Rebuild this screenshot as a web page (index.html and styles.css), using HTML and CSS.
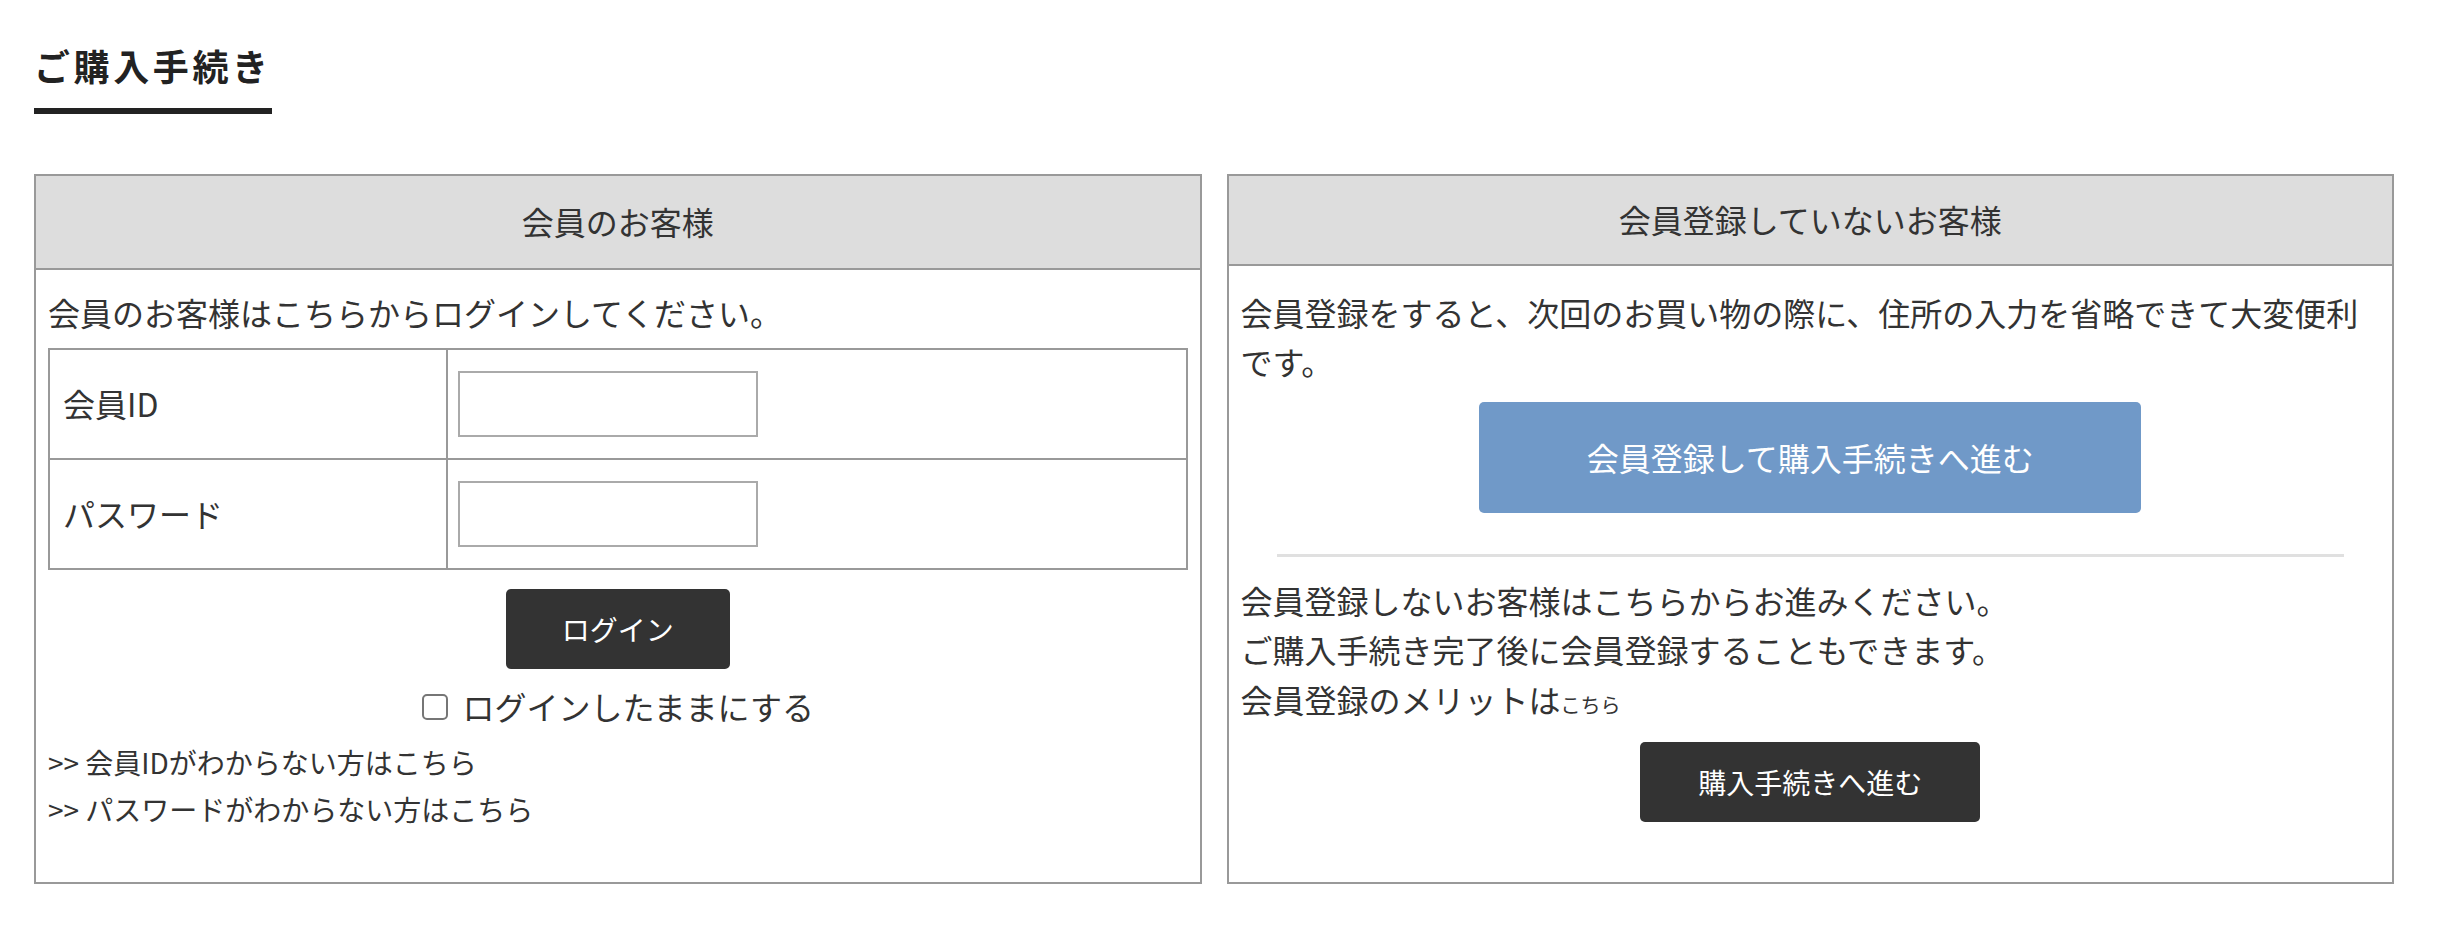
FILE: index.html
```html
<!DOCTYPE html>
<html lang="ja">
<head>
<meta charset="utf-8">
<title>ご購入手続き</title>
<link rel="stylesheet" href="styles.css">
</head>
<body>
<div class="page">
  <h1 class="page-title">ご購入手続き</h1>
  <div class="panels">
    <section class="panel">
      <h2 class="panel-head">会員のお客様</h2>
      <div class="panel-body panel-body--login">
        <p class="text">会員のお客様はこちらからログインしてください。</p>
        <table class="login-table">
          <tr>
            <th>会員ID</th>
            <td><input type="text" class="field"></td>
          </tr>
          <tr>
            <th>パスワード</th>
            <td><input type="password" class="field"></td>
          </tr>
        </table>
        <div class="actions actions--login">
          <button type="button" class="btn btn-dark">ログイン</button>
        </div>
        <label class="keep">
          <input type="checkbox" class="check">
          <span>ログインしたままにする</span>
        </label>
        <ul class="help-links">
          <li><a class="help-link">&gt;&gt; 会員IDがわからない方はこちら</a></li>
          <li><a class="help-link">&gt;&gt; パスワードがわからない方はこちら</a></li>
        </ul>
      </div>
    </section>
    <section class="panel">
      <h2 class="panel-head panel-head--short">会員登録していないお客様</h2>
      <div class="panel-body panel-body--guest">
        <p class="text">会員登録をすると、次回のお買い物の際に、住所の入力を省略できて大変便利です。</p>
        <div class="actions actions--register">
          <button type="button" class="btn btn-blue">会員登録して購入手続きへ進む</button>
        </div>
        <hr class="divider">
        <p class="text">会員登録しないお客様はこちらからお進みください。</p>
        <p class="text">ご購入手続き完了後に会員登録することもできます。</p>
        <p class="text">会員登録のメリットは<a class="small-link">こちら</a></p>
        <div class="actions actions--guest">
          <button type="button" class="btn btn-dark btn-wide">購入手続きへ進む</button>
        </div>
      </div>
    </section>
  </div>
</div>
</body>
</html>
```
FILE: styles.css
```css
* {
  box-sizing: border-box;
}

html,
body {
  margin: 0;
  background: #fff;
}

body {
  font-family: "Noto Sans CJK JP", "Noto Sans", sans-serif;
  color: #333;
}

.page {
  padding: 38px 44px 0 34px;
}

.page-title {
  width: fit-content;
  margin: 0 0 60px;
  padding-bottom: 16px;
  border-bottom: 6px solid #222;
  font-size: 36px;
  font-weight: 700;
  line-height: 54px;
  letter-spacing: 3.6px;
  color: #222;
}

.panels {
  display: flex;
  gap: 25px;
  align-items: stretch;
}

.panel {
  flex: 1 1 0;
  border: 2px solid #999;
}

.panel-head {
  margin: 0;
  padding: 21px 0;
  background: #ddd;
  border-bottom: 2px solid #999;
  text-align: center;
  font-size: 32px;
  font-weight: 400;
  line-height: 49.6px;
  color: #333;
}

.panel-head--short {
  padding: 19px 0;
}

.panel-body {
  padding: 18px 12px 49px;
  font-size: 32px;
  line-height: 49.6px;
}

.panel-body--guest {
  padding-top: 22px;
}

.text {
  margin: 0;
}

.login-table {
  width: 100%;
  margin-top: 11px;
  border-collapse: collapse;
}

.login-table th,
.login-table td {
  border: 2px solid #999;
  padding: 21px 10px;
  vertical-align: middle;
}

.login-table th {
  width: 35%;
  padding-left: 13px;
  text-align: left;
  font-weight: 400;
}

.field {
  display: block;
  width: 300px;
  height: 66px;
  margin: 0;
  padding: 0 10px;
  border: 2px solid #aaa;
  background: #fff;
  font: inherit;
}

.actions {
  text-align: center;
}

.actions--login {
  margin-top: 19px;
}

.actions--register {
  margin-top: 15px;
}

.actions--guest {
  margin-top: 17px;
}

.btn {
  display: inline-block;
  height: 80px;
  margin: 0;
  padding: 0 56px;
  border: 0;
  border-radius: 5px;
  background: #333;
  color: #fff;
  font-family: inherit;
  font-size: 28px;
  line-height: 80px;
  vertical-align: top;
}

.btn-wide {
  padding: 0 58px;
}

.btn-blue {
  width: 662px;
  height: 111px;
  padding: 0;
  background: #7099c8;
  font-size: 32px;
  line-height: 111px;
}

.keep {
  display: flex;
  justify-content: center;
  align-items: center;
  gap: 15px;
  margin-top: 13px;
}

.check {
  appearance: none;
  -webkit-appearance: none;
  width: 26px;
  height: 26px;
  margin: 0;
  border: 2px solid #767676;
  border-radius: 5px;
  background: #fff;
}

.help-links {
  list-style: none;
  margin: 7px 0 0;
  padding: 0;
  font-size: 28px;
  line-height: 47px;
}

.help-link {
  color: #333;
  text-decoration: none;
}

.divider {
  height: 3px;
  margin: 41px 36px 19px;
  border: 0;
  background: #e0e0e0;
}

.small-link {
  font-size: 20px;
  line-height: 1;
  color: #333;
  text-decoration: none;
}
```
